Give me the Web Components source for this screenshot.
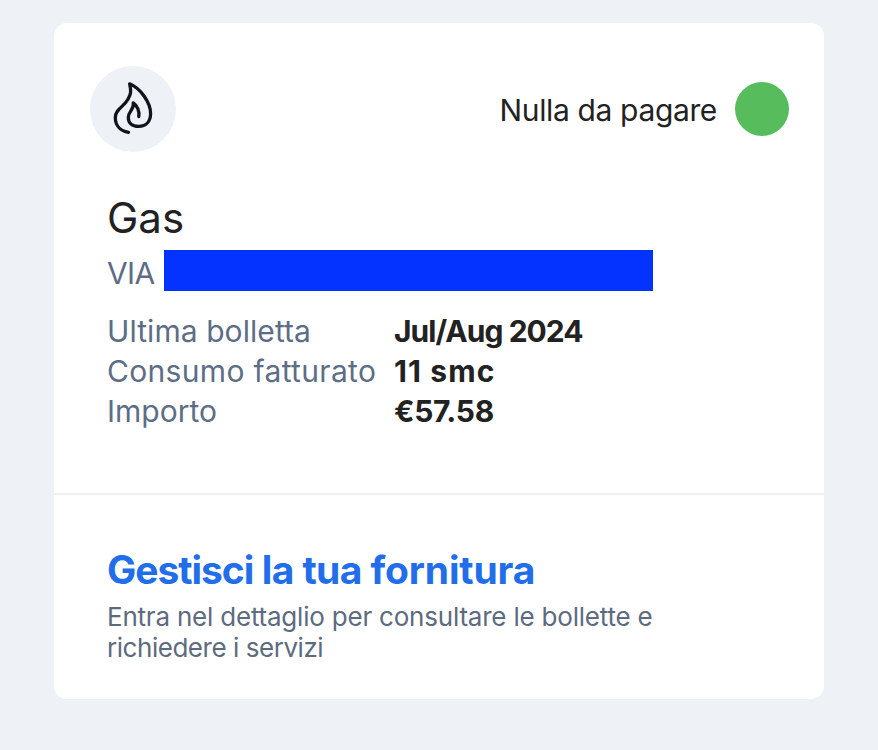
<!DOCTYPE html>
<html lang="it"><head><meta charset="utf-8"><title>Gas</title>
<style>html,body{margin:0;background:#eef1f6}body{height:750px;overflow:hidden;display:flow-root;font-family:Inter,"Liberation Sans",sans-serif}</style></head>
<body>
<supply-card>
<supply-header slot="header">Nulla da pagare</supply-header>
<supply-details slot="details"></supply-details>
<supply-action slot="action"></supply-action>
</supply-card>
<script>
const define = (name, html) => {
  const t = document.createElement('template');
  t.innerHTML = html;
  customElements.define(name, class extends HTMLElement {
    constructor() {
      super();
      this.attachShadow({ mode: 'open' }).append(t.content.cloneNode(true));
    }
  });
};
define('flame-icon', `<style>
:host{display:block;width:86px;height:86px;border-radius:50%;background:#eef1f6}
svg{display:block}
</style>
<svg width="86" height="86" viewBox="0 0 86 86" fill="none" stroke="#11141c" stroke-width="3.3" stroke-linecap="round" stroke-linejoin="round"><path d="M38.500 66.300C30.500 65 25.300 59.500 25.300 51.500C25.500 41 38.500 40 40.600 26.500C41 23.500 40.200 20.500 39.600 17.800C51 22.500 60.600 37 60.600 47.500C60.600 55.500 56 60.400 48.500 60.400C42 60.400 38.300 57 38.300 51.500C38.300 45 44.500 43.500 43.300 36.800C47.500 39.500 49.600 45.500 48.800 50.500"/></svg>`);
define('status-dot', `<style>:host{display:block;width:54px;height:54px;border-radius:50%;background:#57bd5c}</style>`);
define('supply-header', `<style>
:host{display:flex;align-items:center;gap:18px;color:#222}
span{margin-left:auto;padding-top:2px;font-size:30px;line-height:40px;letter-spacing:-.36px}
</style><flame-icon></flame-icon><span><slot></slot></span><status-dot></status-dot>`);
define('supply-details', `<style>
:host{display:block;color:#222;font-size:30px;line-height:40px}
h2{margin:0 0 0 -1px;font-size:42px;font-weight:430;line-height:50px}
.address{display:flex;margin-top:7px;color:#5d6d86}
.address span{width:56px;padding-top:3px;box-sizing:border-box;height:41px;letter-spacing:-.6px;margin-left:-1px}
.address i{margin-left:1px;width:489px;height:41px;background:#0433ff}
.bill{display:grid;grid-template-columns:287px 1fr;grid-auto-rows:40px;margin:20px 0 1px -1px;white-space:nowrap}
.bill span{color:#5d6d86}
b{font-weight:680}
</style>
<h2>Gas</h2><div class="address"><span>VIA</span><i></i></div>
<div class="bill"><span style="letter-spacing:.07px">Ultima bolletta</span><b style="letter-spacing:-.97px">Jul/Aug 2024</b><span style="letter-spacing:.33px">Consumo fatturato</span><b style="letter-spacing:1.1px">11 smc</b><span>Importo</span><b style="letter-spacing:-.35px">€57.58</b></div>`);
define('supply-action', `<style>
:host{display:block}
h3{margin:0 0 7px -1px;font-size:39px;line-height:48px;letter-spacing:-.6px;color:#226eea}
p{margin:0 0 0 -1px;font-size:26px;line-height:31px;color:#5d6b80;white-space:nowrap}
h3 span:first-child{letter-spacing:-1.05px}
h3 span:last-child{letter-spacing:-.16px}
</style><h3><span>Gestisci</span> la tua <span>fornitura</span></h3><p><span style="letter-spacing:-.21px">Entra nel dettaglio per consultare le bollette e</span><br><span style="letter-spacing:-.46px">richiedere i servizi</span></p>`);
define('supply-card', `<style>
:host{display:flex;flex-direction:column;box-sizing:border-box;width:770px;height:676px;margin:23px 0 0 54px;background:#fff;border-radius:13px}
.h{padding:43px 35px 0 36px}
.d{padding:41px 54px 0}
.s{padding:51px 54px 0;border-top:2px solid #f1f1f5;margin-top:61px}
</style><div class="h"><slot name="header"></slot></div><div class="d"><slot name="details"></slot></div><div class="s"><slot name="action"></slot></div>`);
</script></body></html>
